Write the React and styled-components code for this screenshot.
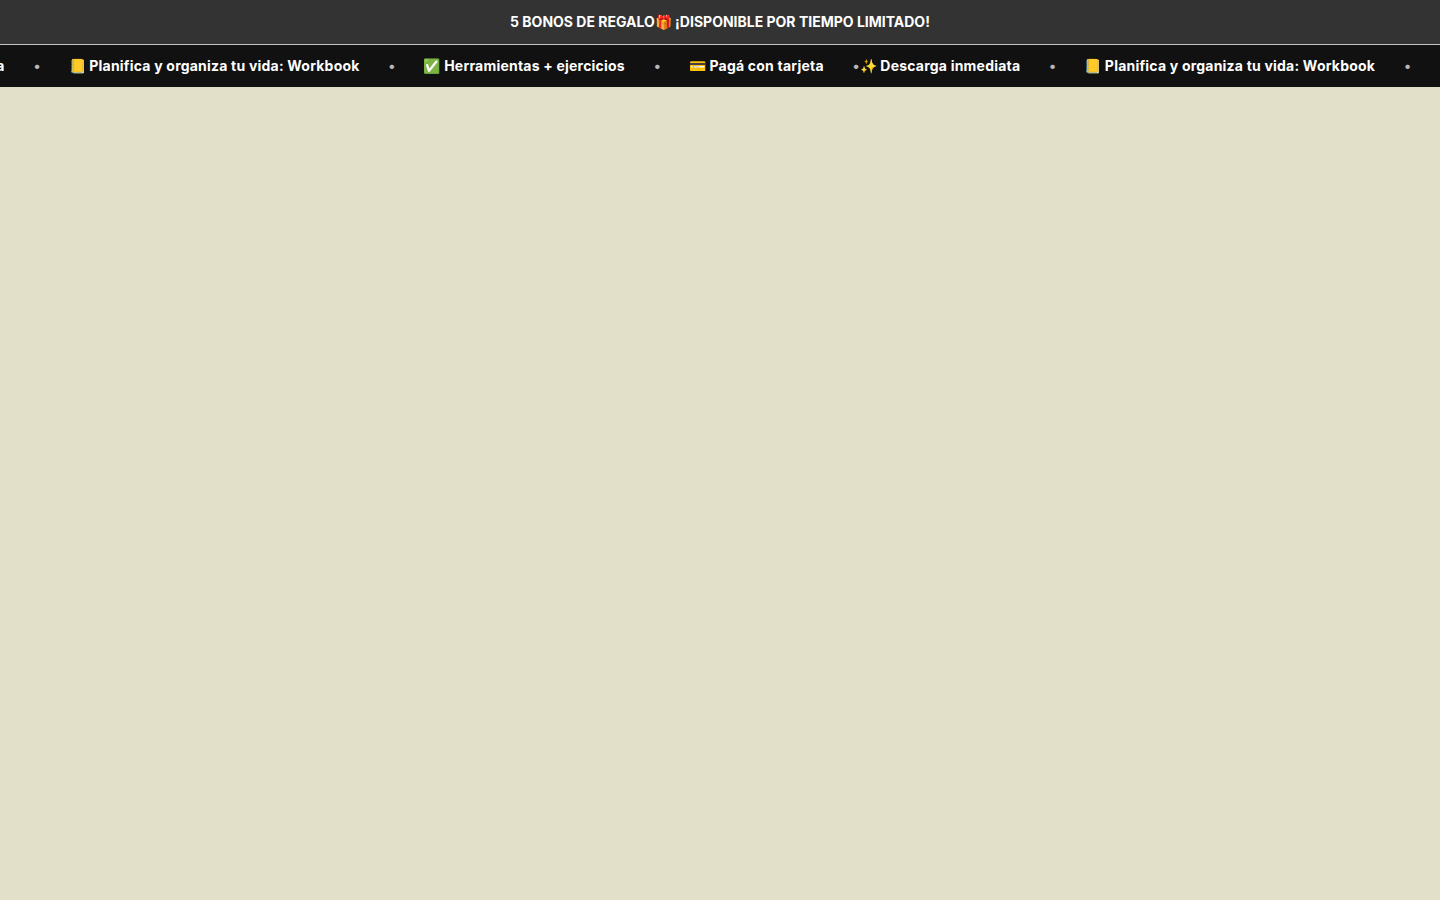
import React from "react";
import styled, { createGlobalStyle } from "styled-components";

const GlobalStyle = createGlobalStyle`
  * { box-sizing: border-box; }
  body {
    margin: 0;
    min-height: 100vh;
    background: #e2e0c9;
    font-family: Inter, "Liberation Sans", sans-serif;
  }
`;

const Announcement = styled.header`
  display: flex;
  align-items: center;
  justify-content: center;
  height: 45px;
  background: #333333;
  border-bottom: 1px solid #c4c4c4;
`;

const AnnouncementText = styled.p`
  margin: 0;
  color: #ffffff;
  font-size: 14px;
  line-height: 20px;
  font-weight: 700;
`;

const Ticker = styled.section`
  display: flex;
  justify-content: flex-end;
  overflow: hidden;
  padding: 11px 29px 11px 0;
  background: #111111;
`;

const Track = styled.div`
  display: flex;
  flex: none;
`;

const Group = styled.ul`
  display: flex;
  flex: none;
  gap: 28px;
  margin: 0;
  padding: 0;
  list-style: none;
`;

const Item = styled.li`
  display: flex;
  gap: 29px;
  color: #ffffff;
  font-size: 14px;
  line-height: 20px;
  font-weight: 700;
  letter-spacing: 0.015em;
  white-space: nowrap;
`;

const Dot = styled.span`
  opacity: 0.7;
`;

const messages = [
  "✨ Descarga inmediata",
  "📒 Planifica y organiza tu vida: Workbook",
  "✅ Herramientas + ejercicios",
  "💳 Pagá con tarjeta",
];

function TickerGroup({ items }) {
  return (
    <Group>
      {items.map((text) => (
        <Item key={text}>
          <span>{text}</span>
          <Dot aria-hidden="true">•</Dot>
        </Item>
      ))}
    </Group>
  );
}

export default function App() {
  return (
    <>
      <GlobalStyle />
      <Announcement>
        <AnnouncementText>5 BONOS DE REGALO🎁 ¡DISPONIBLE POR TIEMPO LIMITADO!</AnnouncementText>
      </Announcement>
      <Ticker aria-label="Novedades">
        <Track>
          <TickerGroup items={messages} />
          <TickerGroup items={messages.slice(0, 2)} />
        </Track>
      </Ticker>
    </>
  );
}
